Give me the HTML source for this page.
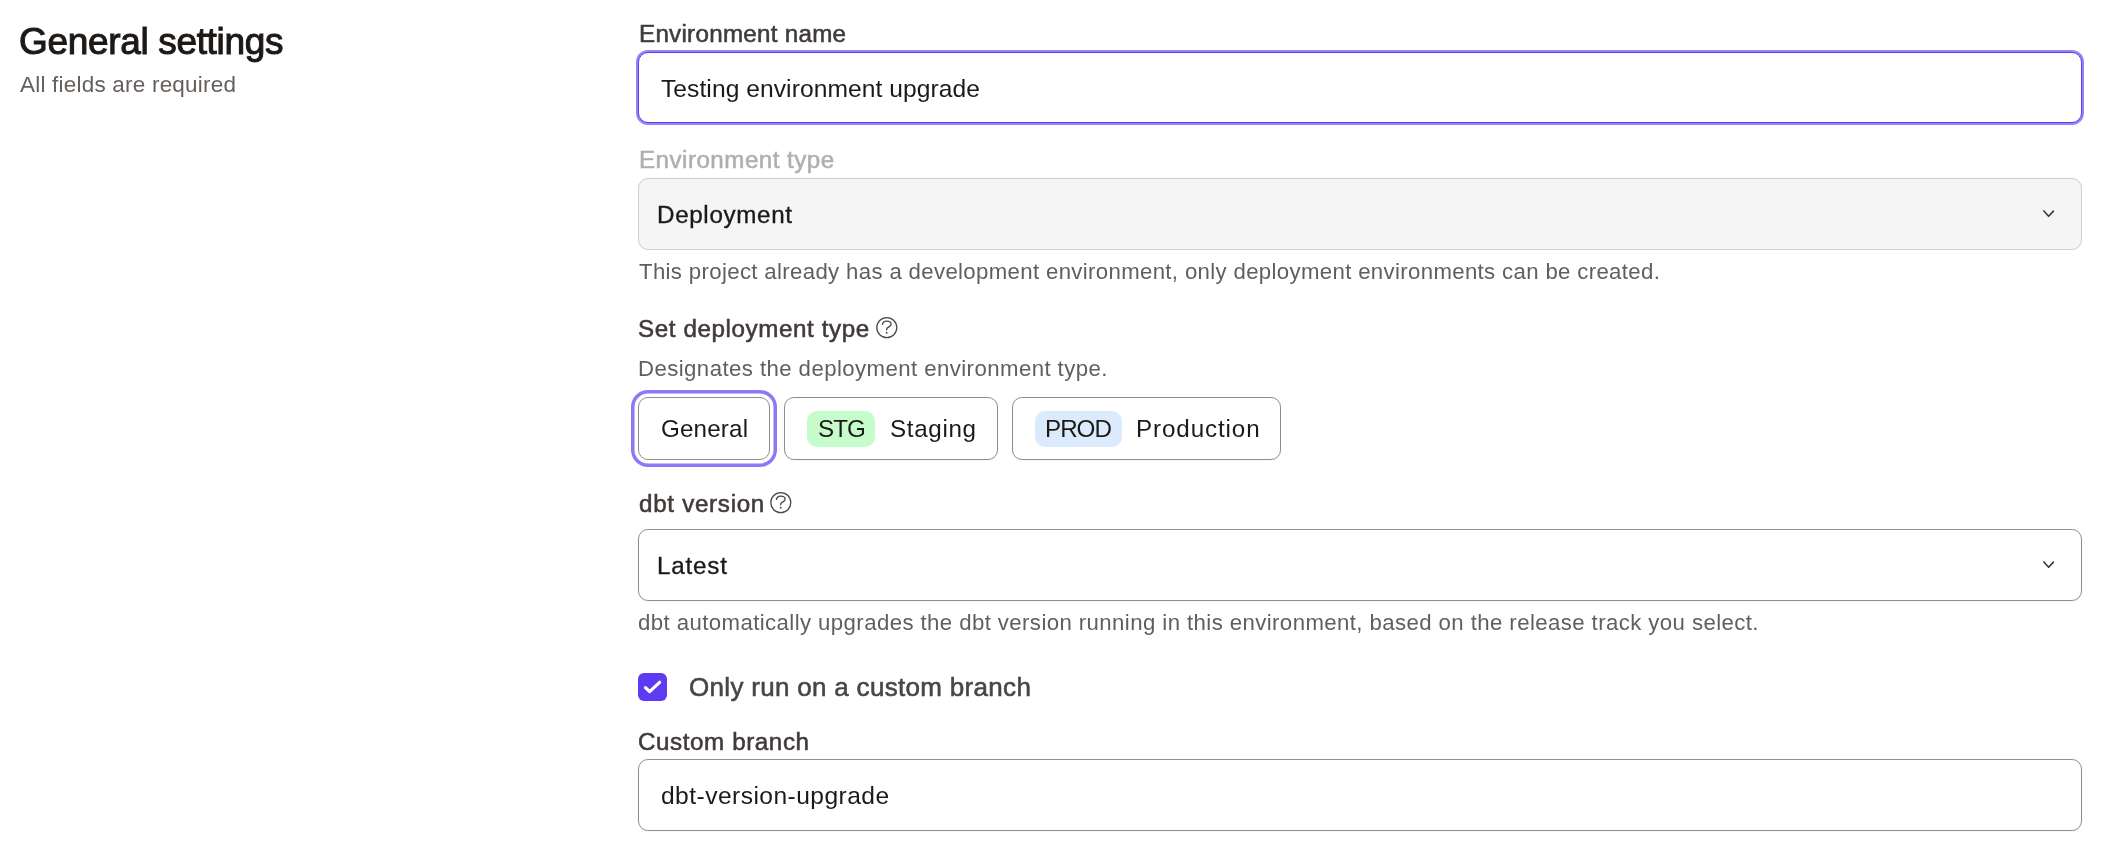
<!DOCTYPE html>
<html><head><meta charset="utf-8"><style>
html,body{margin:0;padding:0;background:#fff;width:2116px;height:864px;overflow:hidden;position:relative}
body{font-family:"Liberation Sans",sans-serif}
.t{will-change:transform;position:absolute;white-space:nowrap;line-height:1;font-family:"Liberation Sans",sans-serif}
.box{position:absolute;box-sizing:border-box}
</style></head><body>

<div class="box" style="left:638px;top:52px;width:1444px;height:71px;border:1px solid #5a3bf0;border-radius:10px;box-shadow:0 0 0 2px #9784f5;background:#fff"></div>
<div class="box" style="left:638px;top:178px;width:1444px;height:72px;border:1px solid #cfcccb;border-radius:10px;background:#f5f5f5"></div>
<div class="box" style="left:638px;top:397px;width:132px;height:63px;border:1px solid #928d8a;border-radius:10px;background:#fff;box-shadow:0 0 0 3.5px #fff,0 0 0 7px #8b79f5"></div>
<div class="box" style="left:784px;top:397px;width:214px;height:63px;border:1px solid #928d8a;border-radius:10px;background:#fff;box-shadow:0 1px 2px rgba(0,0,0,0.04)"></div>
<div class="box" style="left:1012px;top:397px;width:269px;height:63px;border:1px solid #928d8a;border-radius:10px;background:#fff;box-shadow:0 1px 2px rgba(0,0,0,0.04)"></div>
<div class="box" style="left:807px;top:411px;width:68px;height:36px;border-radius:10px;background:#c6fbcb"></div>
<div class="box" style="left:1035px;top:411px;width:87px;height:36px;border-radius:10px;background:#dceafd"></div>
<div class="box" style="left:638px;top:529px;width:1444px;height:72px;border:1px solid #938e8b;border-radius:10px;background:#fff;box-shadow:0 1px 2px rgba(0,0,0,0.04)"></div>
<div class="box" style="left:638px;top:673px;width:29px;height:28px;border-radius:6px;background:#5e3bf2"></div>
<div class="box" style="left:638px;top:759px;width:1444px;height:72px;border:1px solid #938e8b;border-radius:10px;background:#fff;box-shadow:0 1px 2px rgba(0,0,0,0.04)"></div>
<svg style="position:absolute;left:0;top:0" width="2116" height="864" viewBox="0 0 2116 864"><path d="M2043.9 210.9 L2048.6 216.3 L2053.4 211.1" fill="none" stroke="#383433" stroke-width="1.55" stroke-linecap="round" stroke-linejoin="round"/><path d="M2043.9 561.9 L2048.6 567.3 L2053.4 562.1" fill="none" stroke="#383433" stroke-width="1.55" stroke-linecap="round" stroke-linejoin="round"/><circle cx="886.8" cy="327.6" r="10" fill="none" stroke="#4d4846" stroke-width="1.3"/><path d="M882.50 324.40 C882.70 322.00 884.60 321.10 886.70 321.10 C889.10 321.10 891.10 322.30 891.10 324.10 C891.10 326.10 889.40 326.60 888.00 327.40 C887.00 328.00 886.60 328.60 886.60 329.70" fill="none" stroke="#4d4846" stroke-width="1.35" stroke-linecap="round"/><circle cx="886.70" cy="332.70" r="0.95" fill="#4d4846"/><circle cx="780.8" cy="502.6" r="10" fill="none" stroke="#4d4846" stroke-width="1.3"/><path d="M776.50 499.40 C776.70 497.00 778.60 496.10 780.70 496.10 C783.10 496.10 785.10 497.30 785.10 499.10 C785.10 501.10 783.40 501.60 782.00 502.40 C781.00 503.00 780.60 503.60 780.60 504.70" fill="none" stroke="#4d4846" stroke-width="1.35" stroke-linecap="round"/><circle cx="780.70" cy="507.70" r="0.95" fill="#4d4846"/><path d="M645.5 687.6 L649.6 691.6 L659.6 682.3" fill="none" stroke="#fff" stroke-width="3.2" stroke-linecap="round" stroke-linejoin="round"/></svg>
<div class="t" style="left:19.00px;top:23.00px;font-size:37px;letter-spacing:-0.333px;color:#1c1917;-webkit-text-stroke:1.05px #1c1917;">General settings</div>
<div class="t" style="left:19.70px;top:74.00px;font-size:22.5px;letter-spacing:0.209px;color:#66605d;">All fields are required</div>
<div class="t" style="left:639.00px;top:22.00px;font-size:24.2px;letter-spacing:0.267px;color:#403b39;-webkit-text-stroke:0.55px #403b39;">Environment name</div>
<div class="t" style="left:661.30px;top:77.00px;font-size:24.6px;letter-spacing:0.065px;color:#1c1917;">Testing environment upgrade</div>
<div class="t" style="left:639.00px;top:148.00px;font-size:24.2px;letter-spacing:0.467px;color:#b3aeab;-webkit-text-stroke:0.55px #b3aeab;">Environment type</div>
<div class="t" style="left:657.00px;top:203.00px;font-size:24.2px;letter-spacing:0.667px;color:#1c1917;-webkit-text-stroke:0.35px #1c1917;">Deployment</div>
<div class="t" style="left:639.00px;top:261.00px;font-size:22.2px;letter-spacing:0.347px;color:#645e5b;">This project already has a development environment, only deployment environments can be created.</div>
<div class="t" style="left:638.30px;top:317.00px;font-size:24.2px;letter-spacing:0.594px;color:#403b39;-webkit-text-stroke:0.55px #403b39;">Set deployment type</div>
<div class="t" style="left:638.00px;top:358.00px;font-size:22.2px;letter-spacing:0.429px;color:#645e5b;">Designates the deployment environment type.</div>
<div class="t" style="left:661.00px;top:417.00px;font-size:24.2px;letter-spacing:0.167px;color:#1c1917;">General</div>
<div class="t" style="left:818.00px;top:417.00px;font-size:24.2px;letter-spacing:-1.000px;color:#1c1917;">STG</div>
<div class="t" style="left:890.00px;top:417.00px;font-size:24.2px;letter-spacing:0.667px;color:#1c1917;">Staging</div>
<div class="t" style="left:1045.00px;top:417.00px;font-size:24.2px;letter-spacing:-1.000px;color:#1c1917;">PROD</div>
<div class="t" style="left:1136.00px;top:417.00px;font-size:24.2px;letter-spacing:0.889px;color:#1c1917;">Production</div>
<div class="t" style="left:639.00px;top:492.00px;font-size:24.2px;letter-spacing:0.700px;color:#403b39;-webkit-text-stroke:0.55px #403b39;">dbt version</div>
<div class="t" style="left:657.00px;top:554.00px;font-size:24.2px;letter-spacing:0.800px;color:#1c1917;-webkit-text-stroke:0.35px #1c1917;">Latest</div>
<div class="t" style="left:638.00px;top:612.00px;font-size:22.2px;letter-spacing:0.413px;color:#645e5b;">dbt automatically upgrades the dbt version running in this environment, based on the release track you select.</div>
<div class="t" style="left:689.00px;top:674.00px;font-size:26px;letter-spacing:0.308px;color:#4a4543;-webkit-text-stroke:0.55px #4a4543;">Only run on a custom branch</div>
<div class="t" style="left:638.00px;top:730.00px;font-size:24.2px;letter-spacing:0.583px;color:#403b39;-webkit-text-stroke:0.55px #403b39;">Custom branch</div>
<div class="t" style="left:661.00px;top:784.00px;font-size:24.6px;letter-spacing:0.444px;color:#1c1917;">dbt-version-upgrade</div>
</body></html>
